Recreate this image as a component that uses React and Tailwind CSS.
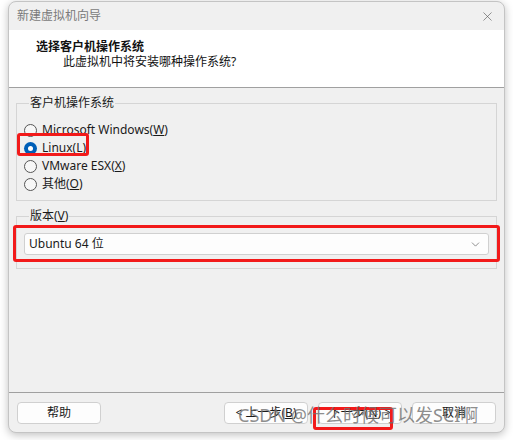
import { ChevronDown, X } from "lucide-react";

const font = "font-['Noto_Sans','Noto_Sans_CJK_SC',sans-serif]";

const Radio = ({ checked, children }) => (
  <div className="h-[18px] flex items-center gap-[5px]">
    {checked ? (
      <span className="w-[13px] h-[13px] rounded-full bg-[#005fb8] flex items-center justify-center">
        <span className="w-[5px] h-[5px] rounded-full bg-white" />
      </span>
    ) : (
      <span className="w-[13px] h-[13px] rounded-full border border-[#555] bg-[#f7f7f7]" />
    )}
    <span className="text-[12px] leading-[16px] text-[#1a1a1a]">{children}</span>
  </div>
);

const Button = ({ children }) => (
  <button className="w-[84px] h-[22px] rounded-[4px] border border-[#d0d0d0] bg-[#fdfdfd] text-[12px] leading-[16px] text-[#1a1a1a]">
    {children}
  </button>
);

export default function App() {
  return (
    <div className={`relative w-[513px] h-[440px] bg-white pt-[1px] px-[8px] ${font}`}>
      {/* dialog window */}
      <div className="w-[497px] h-[432px] rounded-[8px] border border-[#c4c4c4] bg-[#f0f0f0] shadow-[0_2px_8px_rgba(0,0,0,0.25)] overflow-hidden flex flex-col">
        <div className="h-[28px] flex items-center justify-between pl-[8px] pr-[9px]">
          <span className="text-[12px] text-[#7a7a7a]">新建虚拟机向导</span>
          <X size={15} strokeWidth={1} className="text-[#555]" />
        </div>

        <div className="h-[58px] bg-white border-b border-[#a0a0a0] pl-[27px] pt-[9px]">
          <div className="text-[12px] leading-[16px] font-bold text-[#111]">选择客户机操作系统</div>
          <div className="text-[12px] leading-[16px] text-[#111] pl-[27px] mt-[-1px]">此虚拟机中将安装哪种操作系统?</div>
        </div>

        <div className="flex-1 px-[7px] pt-[7px]">
          <fieldset className="border border-[#d5d5d5] pl-[7px] pt-[10px] pb-[7px]">
            <legend className="ml-[5px] px-[1px] text-[12px] leading-[16px] text-[#1a1a1a]">客户机操作系统</legend>
            <Radio>
              Microsoft Windows(<u>W</u>)
            </Radio>
            <Radio checked>
              Linux(<u>L</u>)
            </Radio>
            <Radio>
              VMware ESX(<u>X</u>)
            </Radio>
            <Radio>
              其他(<u>O</u>)
            </Radio>
          </fieldset>

          <fieldset className="mt-[7px] border border-[#d5d5d5] px-[7px] pt-[9px] pb-[13px]">
            <legend className="ml-[5px] px-[1px] text-[12px] leading-[16px] text-[#1a1a1a]">
              版本(<u>V</u>)
            </legend>
            <div className="h-[22px] rounded-[3px] border border-[#d0d0d0] bg-[#fdfdfd] flex items-center justify-between pl-[4px] pr-[6px]">
              <span className="text-[12px] leading-[16px] text-[#1a1a1a]">Ubuntu 64 位</span>
              <ChevronDown size={13} strokeWidth={1.2} className="text-[#555]" />
            </div>
          </fieldset>
        </div>

        <div className="h-[40px] border-t border-[#a0a0a0] flex items-start pt-[9px] pl-[8px] pr-[8px]">
          <Button>帮助</Button>
          <div className="ml-auto flex gap-[10px]">
            <Button>&lt; 上一步(<u>B</u>)</Button>
            <Button>下一步(<u>N</u>) &gt;</Button>
            <Button>取消</Button>
          </div>
        </div>
      </div>

      {/* annotation boxes */}
      <div className="absolute left-[17px] top-[133px] w-[72px] h-[23px] border-[3px] border-[#f21a1a] rounded-[3px]" />
      <div className="absolute left-[13px] top-[225px] w-[487px] h-[37px] border-[3px] border-[#f21a1a] rounded-[3px]" />
      <div className="absolute left-[313px] top-[407px] w-[80px] h-[23px] border-[3px] border-[#f21a1a] rounded-[3px]" />

      {/* watermark */}
      <div className="absolute left-[238px] top-[403px] text-[18px] leading-[24px] text-[#707070]/80 whitespace-nowrap">
        CSDN @什么时候可以发SCI啊
      </div>
    </div>
  );
}
